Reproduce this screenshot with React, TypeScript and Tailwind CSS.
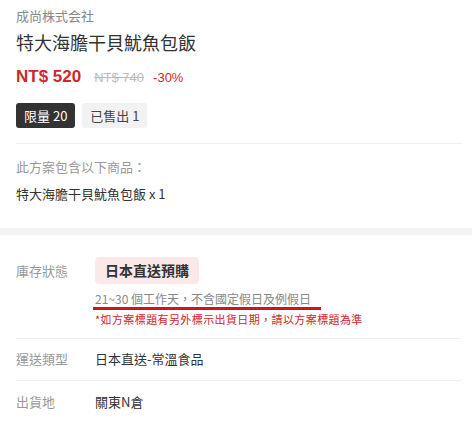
export default function App() {
  const font = { fontFamily: '"Noto Sans CJK TC", "Liberation Sans", sans-serif' };
  const latin = { fontFamily: '"Liberation Sans", sans-serif' };
  return (
    <div className="w-[474px] h-[427px] bg-white text-[#333] overflow-hidden" style={font}>
      <div className="px-4 pt-[7px]">
        <div className="text-[13px] leading-[18px] text-[#888]">成尚株式会社</div>
        <h1 className="mt-[5px] text-[18px] leading-[24px] text-[#333]">特大海膽干貝魷魚包飯</h1>
        <div className="mt-[10px] flex items-baseline gap-[13px]">
          <span className="text-[17px] font-bold text-[#d0262d]" style={latin}>NT$ 520</span>
          <span className="text-[13px] text-[#bbb] line-through" style={latin}>NT$ 740</span>
          <span className="-ml-[4px] text-[13px] text-[#d0262d]" style={latin}>-30%</span>
        </div>
        <div className="mt-[13px] flex gap-[7px]">
          <span className="h-[25px] px-[8px] rounded-[3px] bg-[#333] text-white text-[13px] leading-[25px]">限量 20</span>
          <span className="h-[25px] px-[8px] rounded-[3px] bg-[#f2f2f2] text-[#444] text-[13px] leading-[25px]">已售出 1</span>
        </div>
        <div className="mt-[15px] border-t border-[#eee] mr-[-5px]" />
        <div className="mt-[14px] text-[13px] leading-[18px] text-[#999]">此方案包含以下商品：</div>
        <div className="mt-[9px] text-[13px] leading-[18px] text-[#333]">特大海膽干貝魷魚包飯 x 1</div>
      </div>
      <div className="mt-[25px] h-[7px] bg-[#f3f3f3] w-[472px]" />
      <div className="px-4">
        <div className="flex pt-[22px] pb-[11px]">
          <div className="w-[79px] pt-[5px] text-[13px] leading-[18px] text-[#999]">庫存狀態</div>
          <div className="flex flex-col items-start">
            <div className="h-[27px] px-[10px] rounded-[4px] bg-[#fbe9e9] text-[14px] font-bold leading-[27px] text-[#333]">日本直送預購</div>
            <div className="mt-[7px] pr-[10px] pl-[2px] -ml-[2px] border-b-[3px] border-[#d3121d] text-[12px] leading-[16px] text-[#888]">21~30 個工作天，不含國定假日及例假日</div>
            <div className="mt-[1px] text-[11px] leading-[16px] text-[#d0262d] tracking-[0.4px]">*如方案標題有另外標示出貨日期，請以方案標題為準</div>
          </div>
        </div>
        <div className="border-t border-[#eee] mr-[-3px]" />
        <div className="flex h-[41px] items-center text-[13px]">
          <div className="w-[79px] text-[#999]">運送類型</div>
          <div className="text-[#333]">日本直送-常溫食品</div>
        </div>
        <div className="border-t border-[#eee] mr-[-3px]" />
        <div className="flex h-[42px] items-center text-[13px]">
          <div className="w-[79px] text-[#999]">出貨地</div>
          <div className="text-[#333]">關東N倉</div>
        </div>
      </div>
    </div>
  );
}
